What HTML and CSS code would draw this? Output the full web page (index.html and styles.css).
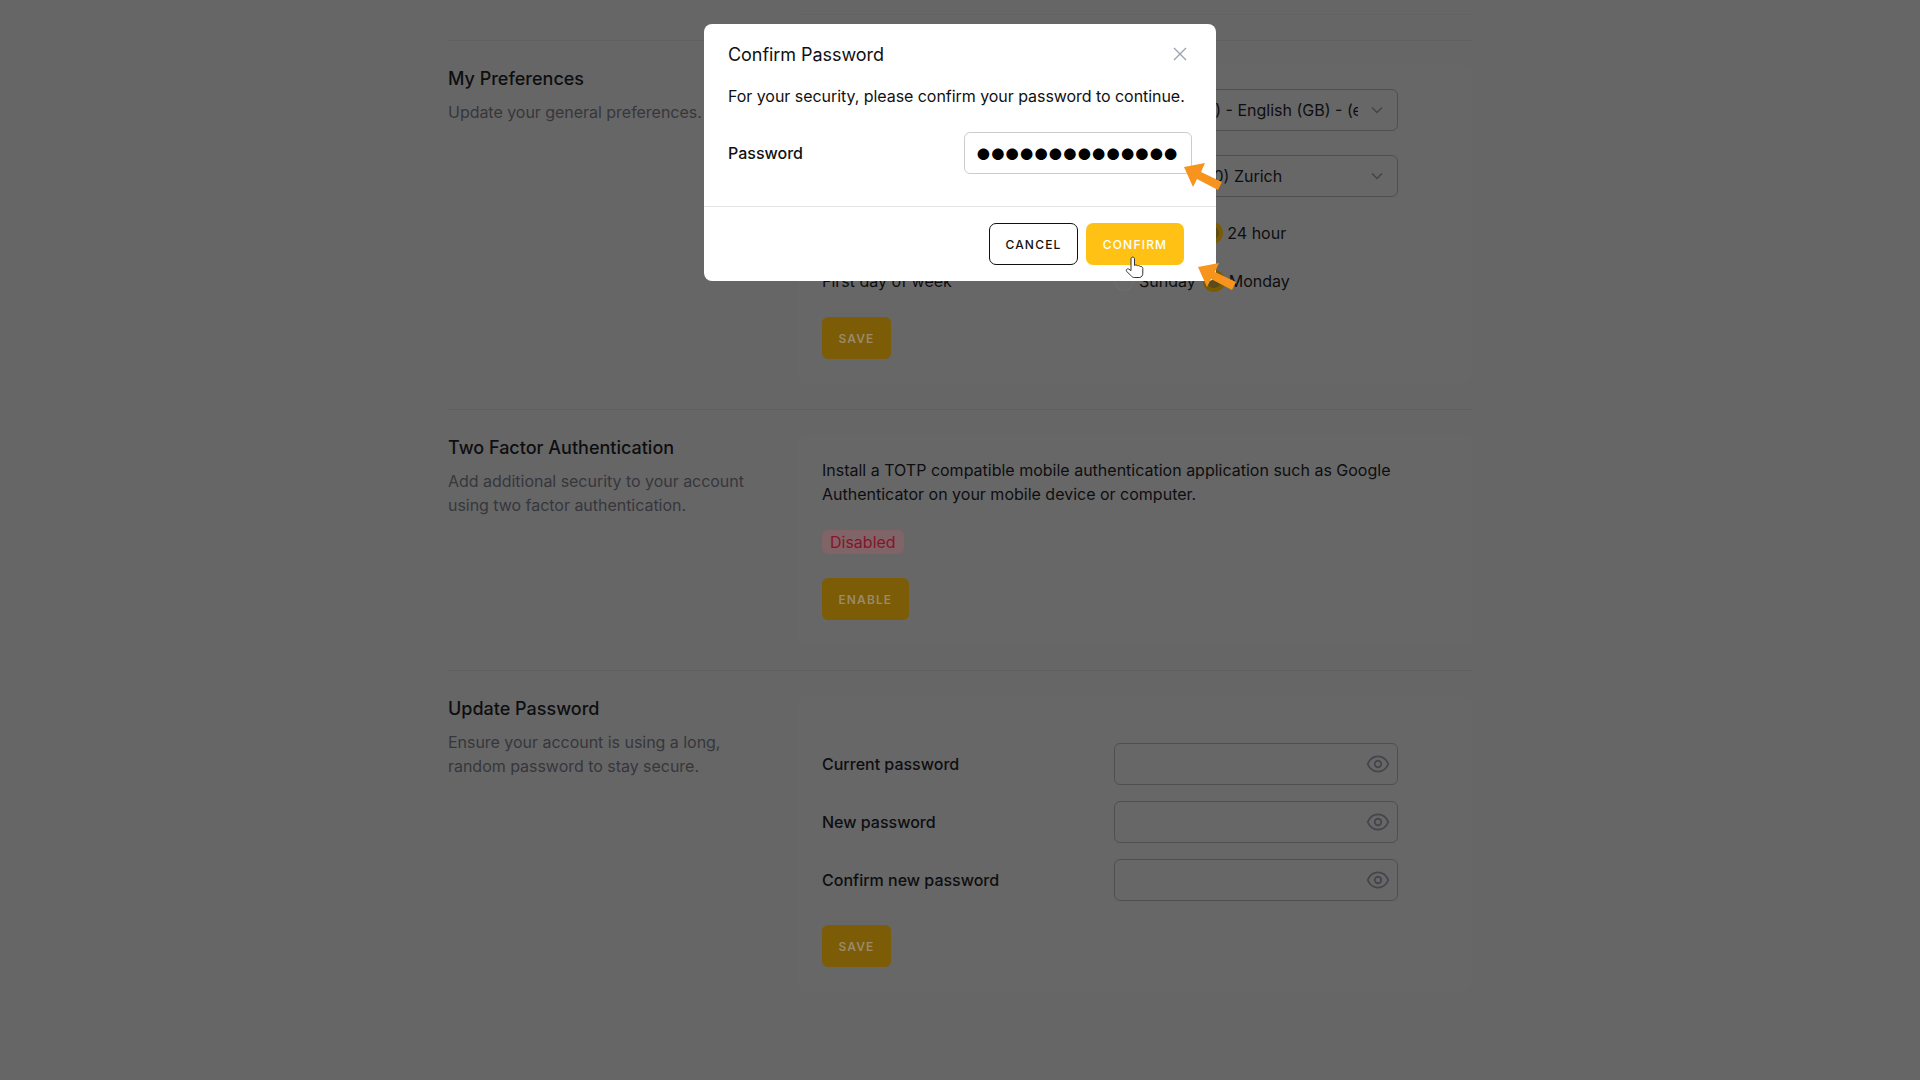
FILE: index.html
```html
<!DOCTYPE html>
<html lang="en">
<head>
  <meta charset="UTF-8">
  <meta name="viewport" content="width=device-width, initial-scale=1.0">
  <title>Profile</title>
  <link rel="stylesheet" href="styles.css">
</head>
<body>

<main class="page">
  <div class="card-tail"></div>

  <section class="section">
    <div class="intro">
      <h2>My Preferences</h2>
      <p>Update your general preferences.</p>
    </div>
    <div class="card">
      <div class="row">
        <label>Language</label>
        <div class="select">
          <span class="select-text">(en-GB-OM) - English (GB) - (en)</span>
          <svg class="chevron" viewBox="0 0 20 20"><path d="M5 7.5l5 5 5-5"/></svg>
        </div>
      </div>
      <div class="row">
        <label>Timezone</label>
        <div class="select">
          <span class="select-text">(GMT+02:00) Zurich</span>
          <svg class="chevron" viewBox="0 0 20 20"><path d="M5 7.5l5 5 5-5"/></svg>
        </div>
      </div>
      <div class="row row-radio">
        <label>Time format</label>
        <div class="radios">
          <span class="radio"></span><span class="radio-label">12 hour</span>
          <span class="radio checked"></span><span class="radio-label">24 hour</span>
        </div>
      </div>
      <div class="row row-radio">
        <label>First day of week</label>
        <div class="radios">
          <span class="radio"></span><span class="radio-label">Sunday</span>
          <span class="radio checked"></span><span class="radio-label">Monday</span>
        </div>
      </div>
      <button class="btn">Save</button>
    </div>
  </section>

  <section class="section">
    <div class="intro">
      <h2>Two Factor Authentication</h2>
      <p>Add additional security to your account using two factor authentication.</p>
    </div>
    <div class="card">
      <p class="card-text">Install a TOTP compatible mobile authentication application such as Google Authenticator on your mobile device or computer.</p>
      <span class="badge">Disabled</span>
      <button class="btn">Enable</button>
    </div>
  </section>

  <section class="section">
    <div class="intro">
      <h2>Update Password</h2>
      <p>Ensure your account is using a long, random password to stay secure.</p>
    </div>
    <div class="card card-password">
      <div class="row row-pass">
        <label>Current password</label>
        <div class="select">
          <svg class="eye" viewBox="0 0 24 24"><path d="M2.500 12C4.300 7.800 7.800 5 12 5s7.700 2.800 9.500 7c-1.800 4.200-5.300 7-9.500 7s-7.700-2.800-9.500-7z"/><circle cx="12" cy="12" r="3"/></svg>
        </div>
      </div>
      <div class="row row-pass">
        <label>New password</label>
        <div class="select">
          <svg class="eye" viewBox="0 0 24 24"><path d="M2.500 12C4.300 7.800 7.800 5 12 5s7.700 2.800 9.500 7c-1.800 4.200-5.300 7-9.500 7s-7.700-2.800-9.500-7z"/><circle cx="12" cy="12" r="3"/></svg>
        </div>
      </div>
      <div class="row row-pass">
        <label>Confirm new password</label>
        <div class="select">
          <svg class="eye" viewBox="0 0 24 24"><path d="M2.500 12C4.300 7.800 7.800 5 12 5s7.700 2.800 9.500 7c-1.800 4.200-5.300 7-9.500 7s-7.700-2.800-9.500-7z"/><circle cx="12" cy="12" r="3"/></svg>
        </div>
      </div>
      <button class="btn">Save</button>
    </div>
  </section>
</main>

<div class="modal">
  <div class="modal-body">
    <div class="modal-head">
      <h3>Confirm Password</h3>
      <svg class="close" viewBox="0 0 16 16"><path d="M2 2l12 12M14 2L2 14"/></svg>
    </div>
    <p class="modal-text">For your security, please confirm your password to continue.</p>
    <div class="modal-field">
      <label for="confirmPassword">Password</label>
      <input type="password" id="confirmPassword" value="12345678901234">
    </div>
  </div>
  <div class="modal-foot">
    <button class="btn-cancel">Cancel</button>
    <button class="btn-confirm">Confirm</button>
  </div>
</div>

<svg class="marks" viewBox="0 0 1920 1080">
  <polygon class="arrow" points="1184,167 1205,163 1201,172 1222,182 1218,190 1197,179 1193,187"/>
  <polygon class="arrow" points="1198,267 1219,263 1215,272 1236,282 1232,290 1211,279 1207,287"/>
  <path class="hand" d="M1131 259c0-2.500 3.500-2.500 3.500 0v6.500c1-.8 2.500-.6 3 .4 1-.6 2.300-.3 2.800.7 1.200-.4 2.500.4 2.500 1.800v4.600c0 2.500-1 4-3 4.500h-5.500c-1.500 0-2.500-.8-3.500-2l-4-4c-1.500-1.700.5-3.500 2.200-2.300l2 1.500z"/>
</svg>

</body>
</html>
```
FILE: styles.css
```css
:root {
  --bg-color: #666666;
  --line-color: #5f5f5f;
  --text-color: #0e0e10;
  --muted-color: #36363c;
  --field-border: #4f4f53;
  --button-dim: #7c5c06;
  --button-dim-text: #9a8a68;
  --yellow: #ffc113;
  --orange: #f7941d;
}
* {
  box-sizing: border-box;
}
html, body {
  height: 100%;
}
body {
  margin: 0;
  overflow: hidden;
  background-color: var(--bg-color);
  color: var(--text-color);
  font-family: 'Inter', sans-serif;
  font-size: 16px;
  line-height: 24px;
}
h2, h3, p {
  margin: 0;
}
.page {
  width: 1024px;
  margin: 0 auto;
}
.card-tail {
  height: 15px;
  margin-left: 350px;
  border-bottom: 1px solid #636363;
}
.section {
  display: grid;
  grid-template-columns: 350px 1fr;
  margin-top: 25px;
  padding-top: 24px;
  border-top: 1px solid var(--line-color);
}
.intro {
  padding-right: 36px;
}
.intro h2 {
  font-size: 18px;
  font-weight: 500;
  line-height: 28px;
}
.intro p {
  margin-top: 7px;
  color: var(--muted-color);
  letter-spacing: -0.03px;
}
.card {
  display: flex;
  flex-direction: column;
  align-items: flex-start;
  padding: 24px 24px 25px;
  border-radius: 8px;
  background-color: #676767;
}
.row {
  display: grid;
  grid-template-columns: 292px 284px;
  align-items: center;
  width: 100%;
  margin-bottom: 24px;
}
.row-pass {
  margin-bottom: 16px;
  font-weight: 500;
}
.row-pass:last-of-type {
  margin-bottom: 24px;
}
.card-password {
  margin-top: 1px;
  padding-top: 47px;
}
.select {
  display: flex;
  align-items: center;
  justify-content: space-between;
  height: 42px;
  padding: 0 10px 0 12px;
  border: 1px solid var(--field-border);
  border-radius: 6px;
}
.select-text {
  width: 231px;
  overflow: hidden;
  white-space: nowrap;
}
.chevron {
  width: 20px;
  height: 20px;
  fill: none;
  stroke: #444448;
  stroke-width: 1.5;
}
.eye {
  width: 26px;
  height: 26px;
  margin-left: auto;
  margin-right: -4px;
  fill: none;
  stroke: #45454c;
  stroke-width: 1.7;
}
.radios {
  display: flex;
  align-items: center;
}
.radio {
  width: 20px;
  height: 20px;
  margin-right: 5px;
  border: 1px solid #6f6f6f;
  border-radius: 50%;
  background-color: #686868;
}
.radio.checked {
  width: 22px;
  height: 22px;
  margin-right: 4px;
  margin-left: -1px;
  border: 4px solid #7a5b02;
  background-color: #5a4a1c;
}
.radio-label {
  margin-right: 8px;
}
.btn {
  height: 42px;
  padding: 0 16.500px;
  border: none;
  border-radius: 6px;
  background-color: var(--button-dim);
  color: var(--button-dim-text);
  font-family: inherit;
  font-size: 12px;
  font-weight: 600;
  letter-spacing: 1.1px;
  text-transform: uppercase;
}
.card-text {
  margin-bottom: 24px;
}
.badge {
  margin-bottom: 24px;
  padding: 0 8px;
  border-radius: 6px;
  background-color: #806468;
  color: #86142a;
}
.modal {
  position: absolute;
  top: 24px;
  left: 704px;
  width: 512px;
  border-radius: 8px;
  background-color: white;
  color: #111;
}
.modal-body {
  padding: 19px 24px 32px;
  border-bottom: 1px solid #e5e5e5;
}
.modal-head {
  display: flex;
  align-items: center;
  justify-content: space-between;
}
.modal-head h3 {
  font-size: 18px;
  font-weight: 400;
  line-height: 24px;
  letter-spacing: -0.05px;
}
.close {
  width: 16px;
  height: 16px;
  margin-right: 4px;
  margin-top: -3px;
  fill: none;
  stroke: #9ca3af;
  stroke-width: 1.4;
}
.modal-text {
  margin-top: 17px;
  letter-spacing: -0.05px;
}
.modal-field {
  display: flex;
  align-items: center;
  justify-content: space-between;
  margin-top: 24px;
}
.modal-field label {
  font-weight: 500;
}
.modal-field input {
  width: 228px;
  height: 42px;
  padding: 0 4px 4px 8px;
  border: 1px solid #ccc;
  border-radius: 6px;
  outline: none;
  color: black;
  font-family: 'Inter', sans-serif;
  font-size: 37px;
  letter-spacing: -6.400px;
}
.modal-foot {
  display: flex;
  justify-content: flex-end;
  gap: 8px;
  padding: 16px 32px 16px 0;
}
.btn-cancel, .btn-confirm {
  height: 42px;
  border-radius: 7px;
  font-family: inherit;
  font-size: 12px;
  font-weight: 500;
  letter-spacing: 1.2px;
  text-transform: uppercase;
}
.btn-cancel {
  width: 89px;
  border: 1px solid #111;
  background-color: white;
  color: #111;
}
.btn-confirm {
  width: 98px;
  border: none;
  background-color: var(--yellow);
  color: white;
}
.marks {
  position: absolute;
  top: 0;
  left: 0;
  width: 1920px;
  height: 1080px;
  pointer-events: none;
}
.arrow {
  fill: var(--orange);
}
.hand {
  fill: white;
  stroke: #333;
  stroke-width: 1;
}
```
